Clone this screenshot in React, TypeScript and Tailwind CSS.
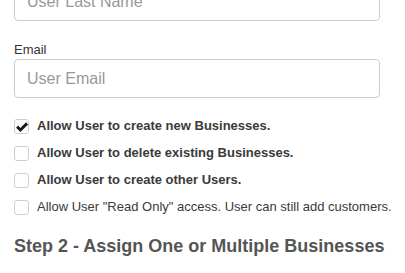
import React from "react";

const font = { fontFamily: '"Liberation Sans", Arial, sans-serif' };

function Box({ checked }: { checked?: boolean }) {
  return (
    <span className="relative flex h-[15px] w-[15px] shrink-0 items-center justify-center rounded-[3px] border border-[#cfcfcf] bg-white">
      {checked && (
        <svg viewBox="0 0 16 16" className="absolute left-[0px] top-[0px] h-[14px] w-[14px]">
          <path d="M1.2 8.8 L3.6 6.4 L6.2 9 L12.6 2.6 L15 5 L6.2 13.8 Z" fill="#1a1a1a" />
        </svg>
      )}
    </span>
  );
}

function Row({ checked, bold, children }: { checked?: boolean; bold?: boolean; children: React.ReactNode }) {
  return (
    <label className="flex h-[20px] items-center gap-[8px]">
      <Box checked={checked} />
      <span className={`text-[13px] leading-[20px] text-[#3a3a3a] ${bold ? "font-bold" : ""}`}>{children}</span>
    </label>
  );
}

export default function App() {
  return (
    <div className="h-[273px] w-[405px] overflow-hidden bg-white" style={font}>
      <div className="-mt-[18px] flex w-[380px] flex-col pl-[14px]">
        <div className="flex h-[39px] items-center rounded-[4px] border border-[#cccccc] px-[12px] text-[16px] text-[#999]">
          User Last Name
        </div>
        <div className="mt-[20px] text-[13px] leading-[18px] text-[#333]">Email</div>
        <div className="flex h-[39px] items-center rounded-[4px] border border-[#cccccc] px-[12px] text-[16px] text-[#999]">
          User Email
        </div>
      </div>
      <div className="mt-[18px] flex flex-col gap-[7px] pl-[14px]">
        <Row checked bold>Allow User to create new Businesses.</Row>
        <Row bold>Allow User to delete existing Businesses.</Row>
        <Row bold>Allow User to create other Users.</Row>
        <Row>Allow User "Read Only" access. User can still add customers.</Row>
      </div>
      <h2 className="mt-[19px] pl-[14px] text-[18px] font-bold leading-[20px] text-[#555]">
        Step 2 - Assign One or Multiple Businesses
      </h2>
    </div>
  );
}
